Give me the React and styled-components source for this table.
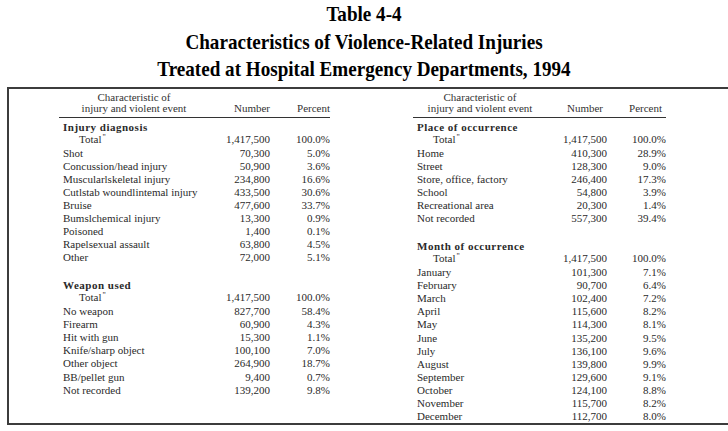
import React from 'react';
import styled, { createGlobalStyle } from 'styled-components';

const GlobalStyle = createGlobalStyle`
  html, body {
    margin: 0;
    background: #fff;
  }
  body {
    font-family: 'Liberation Serif', 'Times New Roman', serif;
    color: #2a2a2a;
  }
`;

const Page = styled.div`
  width: 728px;
  height: 431px;
  overflow: hidden;
`;

const TitleBlock = styled.div`
  padding-top: 1px;
  height: 86px;
  text-align: center;
  transform: scaleX(0.91);
`;

const TitleLine = styled.div`
  font-weight: bold;
  font-size: 21px;
  line-height: 27.5px;
  color: #000;
`;

const Frame = styled.div`
  margin-left: 7px;
  width: 708px;
  height: 331px;
  border: 2px solid #3c3c3c;
  display: flex;
  gap: 83px;
  padding: 3px 0 0 50px;
  box-sizing: content-box;
`;

const Panel = styled.div`
  width: ${(p) => p.$width}px;
  display: grid;
  grid-template-columns: ${(p) => p.$cols};
  align-content: start;
  font-size: 11px;
`;

const HeadLabel = styled.div`
  text-align: center;
  line-height: 11px;
  padding: 0 0 3px 0;
  border-bottom: 1.5px solid #333;
  color: #333;
`;

const HeadCell = styled(HeadLabel)`
  text-align: right;
  display: flex;
  align-items: flex-end;
  justify-content: flex-end;
  padding-right: ${(p) => p.$pad || 0}px;
`;

const SectionTitle = styled.div`
  grid-column: 1 / -1;
  font-weight: bold;
  letter-spacing: 0.5px;
  line-height: 12px;
  padding-left: 4px;
  margin-top: ${(p) => p.$gap || 3}px;
`;

const Label = styled.div`
  padding-left: ${(p) => (p.$total ? 20 : 4)}px;
  white-space: nowrap;
  line-height: ${(p) => p.$lh}px;
`;

const Num = styled.div`
  text-align: right;
  line-height: ${(p) => p.$lh}px;
`;

const Mark = styled.span`
  font-size: 8px;
  position: relative;
  top: -3px;
  margin-left: 1px;
`;

const left = [
  {
    title: 'Injury diagnosis',
    lh: 13,
    rows: [
      ['Shot', '70,300', '5.0%'],
      ['Concussion/head injury', '50,900', '3.6%'],
      ['Muscularlskeletal injury', '234,800', '16.6%'],
      ['Cutlstab woundlintemal injury', '433,500', '30.6%'],
      ['Bruise', '477,600', '33.7%'],
      ['Bumslchemical injury', '13,300', '0.9%'],
      ['Poisoned', '1,400', '0.1%'],
      ['Rapelsexual assault', '63,800', '4.5%'],
      ['Other', '72,000', '5.1%'],
    ],
  },
  {
    title: 'Weapon used',
    gap: 15,
    lh: 13.1,
    rows: [
      ['No weapon', '827,700', '58.4%'],
      ['Firearm', '60,900', '4.3%'],
      ['Hit with gun', '15,300', '1.1%'],
      ['Knife/sharp object', '100,100', '7.0%'],
      ['Other object', '264,900', '18.7%'],
      ['BB/pellet gun', '9,400', '0.7%'],
      ['Not recorded', '139,200', '9.8%'],
    ],
  },
];

const right = [
  {
    title: 'Place of occurrence',
    lh: 13,
    rows: [
      ['Home', '410,300', '28.9%'],
      ['Street', '128,300', '9.0%'],
      ['Store, office, factory', '246,400', '17.3%'],
      ['School', '54,800', '3.9%'],
      ['Recreational area', '20,300', '1.4%'],
      ['Not recorded', '557,300', '39.4%'],
    ],
  },
  {
    title: 'Month of occurrence',
    gap: 15,
    lh: 13.1,
    rows: [
      ['January', '101,300', '7.1%'],
      ['February', '90,700', '6.4%'],
      ['March', '102,400', '7.2%'],
      ['April', '115,600', '8.2%'],
      ['May', '114,300', '8.1%'],
      ['June', '135,200', '9.5%'],
      ['July', '136,100', '9.6%'],
      ['August', '139,800', '9.9%'],
      ['September', '129,600', '9.1%'],
      ['October', '124,100', '8.8%'],
      ['November', '115,700', '8.2%'],
      ['December', '112,700', '8.0%'],
    ],
  },
];

function TablePanel({ sections, width, cols, headPad }) {
  return (
    <Panel $width={width} $cols={cols}>
      <HeadLabel>
        Characteristic of
        <br />
        injury and violent event
      </HeadLabel>
      <HeadCell $pad={headPad}>Number</HeadCell>
      <HeadCell $pad={headPad}>Percent</HeadCell>
      {sections.map((s) => (
        <React.Fragment key={s.title}>
          <SectionTitle $gap={s.gap}>{s.title}</SectionTitle>
          <Label $total $lh={s.lh}>
            Total<Mark>"</Mark>
          </Label>
          <Num $lh={s.lh}>1,417,500</Num>
          <Num $lh={s.lh}>100.0%</Num>
          {s.rows.map(([label, n, pct]) => (
            <React.Fragment key={label}>
              <Label $lh={s.lh}>{label}</Label>
              <Num $lh={s.lh}>{n}</Num>
              <Num $lh={s.lh}>{pct}</Num>
            </React.Fragment>
          ))}
        </React.Fragment>
      ))}
    </Panel>
  );
}

export default function App() {
  return (
    <Page>
      <GlobalStyle />
      <TitleBlock>
        <TitleLine>Table 4-4</TitleLine>
        <TitleLine>Characteristics of Violence-Related Injuries</TitleLine>
        <TitleLine>Treated at Hospital Emergency Departments, 1994</TitleLine>
      </TitleBlock>
      <Frame>
        <TablePanel sections={left} width={271} cols="150px 61px 60px" headPad={0} />
        <TablePanel sections={right} width={259} cols="134px 60px 59px" headPad={4} />
      </Frame>
    </Page>
  );
}
